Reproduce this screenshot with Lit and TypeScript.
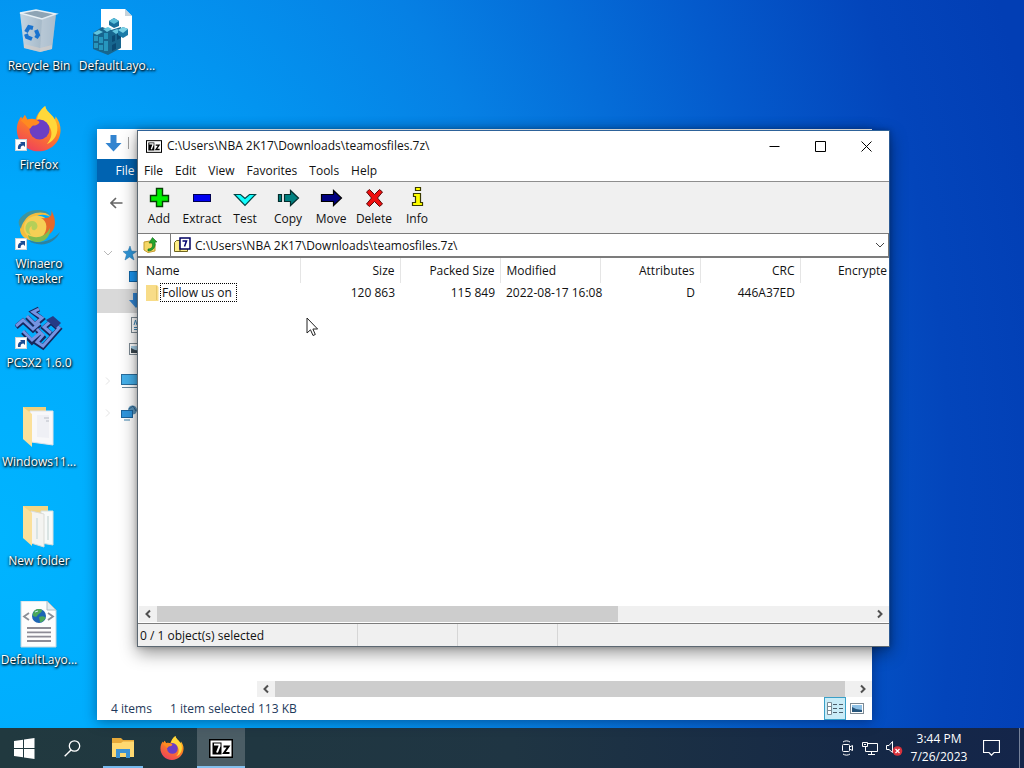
import { LitElement, html, svg, css, type TemplateResult } from "lit";
import { customElement } from "lit/decorators.js";

const shortcutArrow = svg`
  <g transform="translate(0 33)">
    <rect x="0.5" y="0.5" width="11" height="11" fill="#fff" stroke="#c8d4dc"/>
    <path d="M3 10 C2.5 6 4.500 4.500 6.500 4.500 L5 3 H10 V8 L8.500 6.500 C6.500 6.500 5.500 7.500 5.500 10 Z" fill="#1c4d94"/>
  </g>`;

const foxShape = svg`
  <path d="M14 28 C6 28 0.500 21.500 0.500 14.500 C0.500 11 2 8 3.200 6.500 L4 8.500 L5.500 5.500 L7 8.500 C9 7.500 11 8 12 8.500 C13 5 15 2.500 18 0 C18.500 4 22 5.500 24 8.500 L24.500 6.500 C26.500 9 27.600 12 27.500 15 C27.300 22.500 21.500 28 14 28 Z" fill="url(#foxBody)"/>
  <path d="M18 0 C18.500 4 25 6 25.500 13 C26 19 22 22.500 19 23.500 C24 18 22 12 17 9.500 C15 8.500 14 8 13 8.500 C13.500 5 15 2.500 18 0 Z" fill="#ffd83a"/>
  <circle cx="14.500" cy="14.500" r="6.200" fill="#6b3fc4"/>
  <path d="M3 9 L5.500 5.500 L7 8.500 C10 7.500 13 8.500 14.500 9.800 C14 11.500 12 12 10.500 12 C9.500 12.500 9.500 13.500 8.500 14 Z" fill="#ff8a20"/>`;

const foxDefs = svg`
  <defs><linearGradient id="foxBody" x1="0.800" y1="0" x2="0.300" y2="1">
    <stop offset="0" stop-color="#ffd230"/><stop offset="0.400" stop-color="#ff8a1c"/><stop offset="1" stop-color="#f0405c"/>
  </linearGradient></defs>`;

const icons: Record<string, TemplateResult> = {
  bin: html`<svg width="48" height="48" viewBox="0 0 48 48" aria-hidden="true">
    <defs><linearGradient id="binFace" x1="0" x2="1"><stop offset="0" stop-color="#c3d5e2"/><stop offset="0.550" stop-color="#a9bccb"/><stop offset="1" stop-color="#8fa9bd"/></linearGradient></defs>
    <path d="M5 6 L21 3 L41 7 L37 42 L25 45 L9 41 Z" fill="url(#binFace)"/>
    <path d="M5 6 L21 3 L41 7 L27 12 Z" fill="#8ea4b5" stroke="#e6eff5" stroke-width="1.500"/>
    <path d="M27 12 L41 7 L37 42 L25 45 Z" fill="#d3dde5" opacity="0.400"/>
    <path d="M9 37 L25 41 L37 38 L37 42 L25 45 L9 41 Z" fill="#d8cfc8" opacity="0.600"/>
    <g fill="none" stroke="#1973cf" stroke-width="4"><path d="M11 25 L14 20 L18 21"/><path d="M21 23 L23 28 L21 31"/><path d="M17 32 L12 30 L11 27"/></g>
  </svg>`,
  registry: html`<svg width="48" height="48" viewBox="0 0 48 48" aria-hidden="true">
    <path d="M8 2 H32 L39 9 V43 H8 Z" fill="#fff"/><path d="M32 2 L39 9 H32 Z" fill="#c5d2da"/>
    <path d="M0 26 L9 20 L18 23 L28 20 V41 L15 48 L0 42 Z" fill="#17668f"/>
    <g fill="#62c5df"><path d="M0 26 L6 23 L10 25 L4 28Z"/><path d="M10 22 L15 20 L19 22 L14 25Z"/><path d="M19 24 L24 22 L28 24 L23 27Z"/></g>
    <g fill="#2796bd"><path d="M1 29 H5 V34 H1Z"/><path d="M6 30 H10 V36 H6Z"/><path d="M11 26 H15 V32 H11Z"/><path d="M1 36 H5 V41 H1Z"/><path d="M6 38 H10 V43 H6Z"/><path d="M11 34 H15 V44 H11Z"/></g>
    <g fill="#0b4b75"><path d="M19 29 L22 28 V34 L19 35Z"/><path d="M24 27 L28 25 V31 L24 33Z"/><path d="M19 38 L23 36 V42 L19 44Z"/></g>
    <path d="M16 14 L21 11 L26 14 V19 L21 21 L16 18Z" fill="#176f9b"/><path d="M16 14 L21 11 L26 14 L21 17Z" fill="#58bdd9"/>
    <path d="M25 23 L30 20 L35 22 V28 L30 31 L25 28Z" fill="#1b7ba8"/><path d="M25 23 L30 20 L35 22 L30 26Z" fill="#7bd2e6"/>
  </svg>`,
  firefox: html`<svg width="48" height="48" viewBox="0 0 48 48" aria-hidden="true">${foxDefs}
    <g transform="translate(1 0) scale(1.620)">${foxShape}</g>${shortcutArrow}</svg>`,
  winaero: html`<svg width="48" height="48" viewBox="0 0 48 48" aria-hidden="true">
    <g transform="translate(0 1)">
    <path d="M5 21 C7 5 26 -1 37 12 C27 5 17 10 15 20 C13 28 18 33 22 34 C12 36 4 30 5 21Z" fill="#f3bd3d"/>
    <path d="M20 10 C34 8 38 22 31 29 C24 36 12 34 9 24 C8 16 13 11 20 10Z" fill="#f6cf55"/>
    <path d="M4 14 C12 1 30 2 36 9 C25 4 15 7 10 14 C7 18 6 21 6 23 C4 20 3 17 4 14Z" fill="#3d94a0"/>
    <path d="M36 4 C43 15 41 29 27 31 C33 25 33 15 26 12 C34 13 38 10 36 4Z" fill="#e5682a"/>
    <path d="M13 29 C20 33 30 32 35 22 C36 32 27 38 19 36 C15 34 13 32 13 29Z" fill="#82bb4e"/>
    <path d="M14 34 C22 38 35 37 45 26 C41 35 32 40 22 38 C17 37 15 36 14 34Z" fill="#2d82a0"/>
    <path d="M12 27 C8 20 13 14 18 15 C23 16 24 22 20 24 C17 25 16 22 17 20 C13 22 14 26 16 29Z" fill="#b5cf58"/></g>${shortcutArrow}</svg>`,
  pcsx2: html`<svg width="48" height="48" viewBox="0 0 48 48" aria-hidden="true">
    <g transform="translate(0 4)">
    <g fill="none" stroke="#16275e" stroke-width="5"><path d="M1 19 L8 13 L18 22 L25 16 M8 24 L17 34 L25 27"/><path d="M12 9 L20 17 L27 11 L18 4 L24 1"/><path d="M22 22 L28 29 L22 35 L28 39 L44 21 L36 14 L29 20 L36 26"/></g>
    <g fill="none" stroke="#7594e3" stroke-width="3"><path d="M1 18 L8 12 L18 21 L25 15 M8 23 L17 32 L25 25"/><path d="M12 8 L20 16 L27 10 L18 4 L24 1"/><path d="M22 21 L28 27 L22 34 L28 38 L44 20 L36 13 L29 19 L36 25"/></g>
    <path d="M31 12 L38 8 L46 15 L41 20Z" fill="#253b85"/></g>${shortcutArrow}</svg>`,
  folderOne: html`<svg width="48" height="48" viewBox="0 0 48 48" aria-hidden="true">
    <path d="M8 4 H31 V38 H14 L8 36 Z" fill="#efcf7a"/><path d="M15 8 L38 8 V42 L16 39 Z" fill="#f8f8fa" stroke="#dfe3e8"/>
    <path d="M22 12 H34 V35 L22 34Z" fill="#eff0f5"/><path d="M29 15 H34 M31 18 H34" stroke="#b9bdc6"/>
    <path d="M8 4 L17 11 V44 L8 36 Z" fill="#fbe09a"/></svg>`,
  folderTwo: html`<svg width="48" height="48" viewBox="0 0 48 48" aria-hidden="true">
    <path d="M8 4 H33 V38 H14 L8 36 Z" fill="#f2d583"/><path d="M26 9 H38 V43 L26 41 Z" fill="#f7faf9" stroke="#d5dfdf"/>
    <path d="M16 9 L29 12 V45 L16 41 Z" fill="#f4f4f1" stroke="#dcdcd7"/><path d="M22 16 V37 M33 14 V38" stroke="#dae4e3" stroke-width="2"/>
    <path d="M8 4 L17 11 V44 L8 36 Z" fill="#fbe09a"/></svg>`,
  xml: html`<svg width="48" height="48" viewBox="0 0 48 48" aria-hidden="true">
    <path d="M6 0 H32 L41 9 V46 H6 Z" fill="#fdfdfd" stroke="#c3d6df"/><path d="M32 0 V9 H41Z" fill="#e3edf1" stroke="#aebdc5"/>
    <path d="M14 12 L9 15.500 L14 19 M33 12 L38 15.500 L33 19" fill="none" stroke="#8a8f98" stroke-width="1.800"/>
    <circle cx="24" cy="15" r="7" fill="#1c65b5"/><path d="M19 10 C22 7 26 8 27 9 C27 12 24 12 22 15 C21 17 18 15 17.500 14Z M24 16 C28 14 31 16 30.500 17 C29 20 26 22 25 21Z" fill="#4aa85a"/><path d="M20 11 L23 10" stroke="#c8e8f8"/>
    <path d="M12 27 H36 M12 31.300 H36 M12 35.600 H36 M12 40 H36" stroke="#8d8c96" stroke-width="1.800"/></svg>`,
  add: html`<svg width="24" height="24" viewBox="0 0 24 24" aria-hidden="true"><path d="M9.500 2.500 H15.500 V9.500 H21.500 V15.500 H15.500 V20.500 H9.500 V15.500 H3.500 V9.500 H9.500 Z" fill="#00f000" stroke="#064006" stroke-width="1.400"/></svg>`,
  extract: html`<svg width="24" height="24" viewBox="0 0 24 24" aria-hidden="true"><rect x="3.500" y="8.500" width="17" height="7" fill="#0000f0" stroke="#000050"/></svg>`,
  test: html`<svg width="24" height="24" viewBox="0 0 24 24" aria-hidden="true"><path d="M1.500 8.500 H7.500 L12 12.500 L16.500 8.500 H22.500 L12 19.500 Z" fill="#1ff" stroke="#044" stroke-width="1.200"/></svg>`,
  copy: html`<svg width="24" height="24" viewBox="0 0 24 24" aria-hidden="true"><path d="M2.500 8.500 H5.500 V15.500 H2.500Z M8.500 8.500 H14.500 V4.500 L22.500 12 L14.500 19.500 V15.500 H8.500Z" fill="#008080" stroke="#032c2c" stroke-width="1.200"/></svg>`,
  move: html`<svg width="24" height="24" viewBox="0 0 24 24" aria-hidden="true"><path d="M2.500 8.500 H14.500 V4.500 L22.500 12 L14.500 19.500 V15.500 H2.500Z" fill="#000080" stroke="#000" stroke-width="1.200"/></svg>`,
  delete: html`<svg width="24" height="24" viewBox="0 0 24 24" aria-hidden="true"><path d="M4.500 6 L7.500 3.500 L12.500 8.500 L17.500 3.500 L20.500 6 L15.500 12 L20.500 18 L17.500 20.500 L12.500 15.500 L7.500 20.500 L4.500 18 L9.500 12 Z" fill="#f00f0f" stroke="#5a0909"/></svg>`,
  info: html`<svg width="24" height="24" viewBox="0 0 24 24" aria-hidden="true"><path d="M10.500 1.500 H15.500 V4.500 H10.500Z M8.500 7.500 H15.500 V16.500 H17.500 V19.500 H7.500 V16.500 H10.500 V10.500 H8.500Z" fill="#ff0" stroke="#3a3a00" stroke-width="1.200"/></svg>`,
};

const sevenZip = (w: number, h: number) => html`
  <svg width=${w} height=${h} viewBox="0 0 24 19" aria-hidden="true">
    <rect width="24" height="19" fill="#000"/><rect x="1.500" y="1.500" width="21" height="16" fill="#fff"/>
    <rect x="3.500" y="3.500" width="9" height="12" fill="#000"/>
    <path d="M5 5.500 H10.500 V7 L8 13.500" fill="none" stroke="#fff" stroke-width="2"/>
    <path d="M14.500 7.500 H19.500 L15 14 H20.500" fill="none" stroke="#000" stroke-width="2"/>
  </svg>`;

const chevron = (dir: "left" | "right" | "down", colour: string, stroke = 2) => {
  const d = { left: "M8 2.500 L4.500 6 L8 9.500", right: "M4 2.500 L7.500 6 L4 9.500", down: "M2 4 L6 8 L10 4" }[dir];
  return html`<svg width="12" height="12" viewBox="0 0 12 12" aria-hidden="true"><path d=${d} fill="none" stroke=${colour} stroke-width=${stroke}/></svg>`;
};

const shared = css`
  :host { display: block; box-sizing: border-box; font: 12px/16px "Open Sans", "Noto Sans", sans-serif; color: #111; }
  *, *::before, *::after { box-sizing: border-box; }
  button { font: inherit; color: inherit; background: none; border: 0; margin: 0; padding: 0; }
  svg { display: block; flex: none; }
`;

@customElement("desktop-icons")
export class DesktopIcons extends LitElement {
  static styles = [shared, css`
    .grid { display: grid; grid-auto-flow: column; grid-template-rows: repeat(7, 99px); grid-auto-columns: 78px; justify-content: start; }
    .item { display: flex; flex-direction: column; align-items: center; gap: 3px; padding-top: 7px; color: #fff; line-height: 15px;
      text-shadow: 1px 1px 2px #000, 0 1px 3px #000; }
    .label { max-width: 78px; white-space: pre-line; }
    .second { grid-column: 2; grid-row: 1; }
  `];
  private items: [string, string][] = [
    ["bin", "Recycle Bin"], ["firefox", "Firefox"], ["winaero", "Winaero\nTweaker"], ["pcsx2", "PCSX2 1.6.0"],
    ["folderOne", "Windows11..."], ["folderTwo", "New folder"], ["xml", "DefaultLayo..."], ["registry", "DefaultLayo..."],
  ];
  render() {
    return html`<div class="grid">${this.items.map(([icon, label]) => html`
      <button class="item ${icon === "registry" ? "second" : ""}">${icons[icon]}<span class="label">${label}</span></button>`)}</div>`;
  }
}

@customElement("scroll-strip")
export class ScrollStrip extends LitElement {
  static properties = { thumb: { type: Number } };
  declare thumb: number;
  constructor() { super(); this.thumb = 50; }
  static styles = [shared, css`
    .bar { display: flex; align-items: stretch; height: 16px; background: #f0f0f0; }
    .arrow { width: 18px; flex: none; display: grid; place-items: center; }
    .track { flex: 1; display: flex; }
    .thumb { background: #cdcdcd; }
  `];
  render() {
    return html`<div class="bar">
      <button class="arrow" aria-label="Scroll left">${chevron("left", "#505050")}</button>
      <div class="track"><div class="thumb" style="width:${this.thumb}%"></div></div>
      <button class="arrow" aria-label="Scroll right">${chevron("right", "#505050")}</button>
    </div>`;
  }
}

@customElement("explorer-window")
export class ExplorerWindow extends LitElement {
  static styles = [shared, css`
    :host { display: flex; flex-direction: column; background: #fff; box-shadow: 0 2px 12px rgba(0, 20, 60, 0.450); overflow: hidden; }
    .title { display: flex; align-items: center; gap: 6px; height: 30px; padding: 0 0 2px 8px; }
    .rule { width: 1px; height: 12px; background: #a0a0a0; }
    .ribbon { display: flex; height: 23px; background: #fff; }
    .file { width: 56px; background: #0063b1; color: #fff; }
    .nav { display: flex; align-items: center; height: 42px; padding-left: 13px; }
    .tree { flex: 1; display: flex; flex-direction: column; width: 160px; padding-top: 17px; }
    .node { display: flex; align-items: center; gap: 7px; height: 24px; padding-left: 5px; }
    .child { padding-left: 31px; }
    .group { margin-top: 8px; }
    .on { background: #d9d9d9; }
    .scroll { margin-left: 160px; }
    .status { display: flex; align-items: center; height: 23px; padding-left: 14px; color: #1e395b; }
    .first { width: 59px; }
    .second { width: 88px; }
    .views { margin-left: auto; margin-right: 4px; display: flex; align-items: center; }
    .view { display: grid; place-items: center; width: 22px; height: 23px; }
    .picked { background: #c9ecf7; border: 1px solid #3aa0c8; }
  `];
  render() {
    return html`
      <div class="title">
        <svg width="17" height="17" viewBox="0 0 17 17" aria-hidden="true"><path d="M5.500 0 H11.500 V8 H16.500 L8.500 16.500 L0.500 8 H5.500Z" fill="#3284d0"/></svg>
        <span class="rule"></span>
      </div>
      <div class="ribbon"><button class="file">File</button></div>
      <div class="nav"><svg width="13" height="12" viewBox="0 0 13 12" aria-hidden="true"><path d="M12.500 6 H1.500 M6 1 L1 6 L6 11" fill="none" stroke="#666" stroke-width="1.600"/></svg></div>
      <div class="tree">
        <div class="node">${chevron("down", "#b8b8b8", 1)}<svg width="16" height="16" viewBox="0 0 16 16" aria-hidden="true"><path d="M9 1 L10.500 6 L15.500 6.500 L11.500 9.500 L13 15 L8.500 12 L4 15 L5.500 9.500 L2 6.500 L7 6Z" fill="#2f96d8" stroke="#2674ac" stroke-width="0.500"/></svg></div>
        <div class="node child"><svg width="16" height="16" viewBox="0 0 16 16" aria-hidden="true"><rect x="1.500" y="2.500" width="14" height="10" fill="#1c96f0" stroke="#0f65a8"/></svg></div>
        <div class="node child on"><svg width="16" height="16" viewBox="0 0 16 16" aria-hidden="true"><path d="M5 0 H11 V7 H15 L8 15 L1 7 H5Z" fill="#3284d0"/></svg></div>
        <div class="node child"><svg width="16" height="16" viewBox="0 0 16 16" aria-hidden="true"><rect x="3.500" y="0.500" width="12" height="15" fill="#fff" stroke="#7d8a94"/><path d="M6 8 L7.500 3 L9 8 M6 10.500 H13 M6 12.500 H13" fill="none" stroke="#3b88bb"/></svg></div>
        <div class="node child"><svg width="16" height="16" viewBox="0 0 16 16" aria-hidden="true"><rect x="1.500" y="2.500" width="14" height="11" fill="#fff" stroke="#7d8a94"/><path d="M3 5 H14 V12 H3Z" fill="#a5cee6"/><path d="M3 12 V7 L7 9 L14 10 V12Z" fill="#3d4a52"/></svg></div>
        <div class="node group">${chevron("right", "#e4e4e4", 1)}<svg width="17" height="16" viewBox="0 0 17 16" aria-hidden="true"><rect x="0.500" y="1.500" width="16" height="10" fill="#45b0ea" stroke="#2b6e9c"/><path d="M1 14.500 H17" stroke="#6b8799"/></svg></div>
        <div class="node group">${chevron("right", "#e4e4e4", 1)}<svg width="17" height="16" viewBox="0 0 17 16" aria-hidden="true"><circle cx="11.500" cy="5" r="4.500" fill="#5b95bb"/><path d="M8 4 L12 1 L15 6" fill="none" stroke="#2c5f88"/><rect x="0.500" y="5.500" width="11" height="7" fill="#2f96de" stroke="#1d639a"/><path d="M3 15 H9" stroke="#3b82ad"/></svg></div>
      </div>
      <scroll-strip class="scroll" thumb="98.500"></scroll-strip>
      <div class="status">
        <span class="first">4 items</span><span class="second">1 item selected</span><span>113 KB</span>
        <div class="views">
          <button class="view picked" aria-label="Details view"><svg width="17" height="13" viewBox="0 0 17 13" aria-hidden="true"><path d="M0.500 0.500 H4.500 V12.500 H0.500Z M0.500 4.500 H4.500 M0.500 8.500 H4.500" fill="#fff" stroke="#7a8b95"/><path d="M6 2.500 H10 M12 2.500 H16 M6 6.500 H10 M12 6.500 H16 M6 10.500 H10 M12 10.500 H16" stroke="#4c5f6c"/></svg></button>
          <button class="view" aria-label="Large icons view"><svg width="14" height="11" viewBox="0 0 14 11" aria-hidden="true"><rect x="0.500" y="0.500" width="13" height="10" fill="#fff" stroke="#7d8a94"/><path d="M2 2 H12 V9 H2Z" fill="#8fc1e6"/><path d="M2 4 L6 6 L12 7 V9 H2Z" fill="#27567c"/></svg></button>
        </div>
      </div>`;
  }
}

@customElement("archive-window")
export class ArchiveWindow extends LitElement {
  static styles = [shared, css`
    :host { display: flex; flex-direction: column; background: #fff; border: 1px solid #5c6872; border-right-color: #2c5a94; border-top-color: #2d6299;
      box-shadow: 0 6px 16px rgba(0, 0, 0, 0.420), 0 0 5px rgba(0, 0, 0, 0.250); }
    .title { display: flex; align-items: center; height: 30px; padding-left: 8px; }
    .name { font: inherit; margin: 0 0 0 5px; flex: 1; }
    .win { width: 46px; height: 28px; display: grid; place-items: center; }
    .menu { display: flex; height: 21px; border-bottom: 1px solid #8e8e8e; }
    .entry { padding: 0 6px; line-height: 20px; }
    .tools { display: flex; height: 52px; background: #f0f0f0; border-bottom: 1px solid #7c7c7c; }
    .tool { width: 43px; display: flex; flex-direction: column; align-items: center; padding: 4px 1px 0 0; gap: 1px; white-space: nowrap; }
    .path { display: flex; height: 24px; border-bottom: 2px solid #7c7c7c; }
    .up { width: 32px; padding-left: 5px; display: flex; align-items: center; }
    .combo { flex: 1; display: flex; align-items: center; gap: 4px; padding: 0 2px 0 3px; border-left: 1px solid #7a7a7a; border-right: 1px solid #7a7a7a; }
    .select { appearance: none; flex: 1; border: 0; background: transparent; font: inherit; color: inherit; padding: 1px 0 0; margin: 0; outline: 0; }
    .list { flex: 1; overflow: hidden; padding-left: 1px; }
    .table { table-layout: fixed; width: 100%; border-collapse: collapse; }
    .table th, .table td { font-weight: 400; text-align: right; padding: 0 5px 0 6px; width: 100px; white-space: nowrap; }
    .table th { height: 25px; border-right: 1px solid #e5e5e5; }
    .table td { height: 19px; }
    .table .left { text-align: left; }
    .table .date { padding-right: 0; }
    .table .wide { width: 161px; padding-left: 7px; }
    .table .rest { width: auto; padding-right: 2px; border-right: 0; }
    .cell { display: flex; align-items: center; gap: 2px; }
    .focus { outline: 1px dotted #000; padding: 0 4px 0 1px; line-height: 17px; }
    .foot { border: solid #fff; border-width: 0 0 1px 1px; }
    .status { display: flex; height: 23px; background: #f0f0f0; border-top: 1px solid #7c7c7c; line-height: 24px; }
    .pane { width: 100px; border-right: 1px solid #d6d6d6; }
    .count { width: 220px; padding-left: 2px; }
  `];
  private menu = ["File", "Edit", "View", "Favorites", "Tools", "Help"];
  private tools = ["Add", "Extract", "Test", "Copy", "Move", "Delete", "Info"];
  private columns = ["Name", "Size", "Packed Size", "Modified", "Attributes", "CRC", "Encrypte"];
  private location = "C:\\Users\\NBA 2K17\\Downloads\\teamosfiles.7z\\";
  private controls = [
    ["Minimize", "M0.500 5.500 H10.500"],
    ["Maximize", "M0.500 0.500 H10.500 V10.500 H0.500Z"],
    ["Close", "M0.500 0.500 L10.500 10.500 M10.500 0.500 L0.500 10.500"],
  ];
  private cls(i: number) { return i === 0 ? "left wide" : i === 3 ? "left date" : i === 6 ? "rest" : ""; }
  render() {
    return html`
      <div class="title">${sevenZip(16, 13)}<h1 class="name">${this.location}</h1>
        ${this.controls.map(([label, d]) => html`
          <button class="win" aria-label=${label}><svg width="11" height="11" viewBox="0 0 11 11" aria-hidden="true"><path d=${d} fill="none" stroke="#000"/></svg></button>`)}
      </div>
      <div class="menu" role="menubar">${this.menu.map((m) => html`<button class="entry" role="menuitem">${m}</button>`)}</div>
      <div class="tools">${this.tools.map((t) => html`<button class="tool">${icons[t.toLowerCase()]}<span>${t}</span></button>`)}</div>
      <div class="path">
        <button class="up" aria-label="Up one level"><svg width="16" height="16" viewBox="0 0 16 16" aria-hidden="true"><path d="M1 5 L7 4 L12 7 V14 L5 15.500 L1 13Z" fill="#f4d765" stroke="#c39b30"/><path d="M5 12 C10 12 10 8 9 6 H6 L9.500 0.500 L14 5 H12 C13 10 10 14 5 14Z" fill="#25a52c" stroke="#0d661a" stroke-width="0.600"/></svg></button>
        <label class="combo">
          <svg width="17" height="16" viewBox="0 0 17 16" aria-hidden="true"><path d="M0.500 5.500 L2.500 3.500 H6 V14.500 H0.500Z M6 14.500 H13.500 V11 H6" fill="#ffef86" stroke="#6e6420"/><rect x="6" y="1" width="10" height="11" fill="#fff" stroke="#000060" stroke-width="1.500"/><path d="M8.500 4 H12.500 L10.500 9.500" fill="none" stroke="#000070" stroke-width="1.500"/></svg>
          <select class="select" aria-label="Current folder"><option>${this.location}</option></select>
          ${chevron("down", "#444", 1)}
        </label>
      </div>
      <div class="list">
        <table class="table">
          <thead><tr>${this.columns.map((c, i) => html`<th class=${this.cls(i)}>${c}</th>`)}</tr></thead>
          <tbody><tr>
            <td class="left wide"><div class="cell"><svg width="13" height="16" viewBox="0 0 13 16" aria-hidden="true"><path d="M0 0 H11 L12.500 2 V16 H0Z" fill="#f8dc88"/><path d="M10.500 1 V15" stroke="#e6c76a"/></svg><span class="focus">Follow us on</span></div></td>
            <td>120 863</td><td>115 849</td><td class="left date">2022-08-17 16:08</td><td>D</td><td>446A37ED</td><td></td>
          </tr></tbody>
        </table>
      </div>
      <scroll-strip class="foot" thumb="64.500"></scroll-strip>
      <div class="status"><span class="pane count">0 / 1 object(s) selected</span><span class="pane"></span><span class="pane"></span></div>`;
  }
}

@customElement("task-bar")
export class TaskBar extends LitElement {
  static styles = [shared, css`
    :host { color: #fff; }
    .bar { display: flex; height: 40px; background: linear-gradient(90deg, #21393f, #1f3543 50%, #152846 85%, #14254a); }
    .task { width: 48px; display: grid; place-items: center; border-bottom: 2px solid transparent; padding-top: 2px; }
    .apps { display: flex; gap: 1px; margin-left: 3px; }
    .open { background: linear-gradient(#76b9ed, #76b9ed) bottom / 40px 2px no-repeat border-box; }
    .active { background: #4b5d65; border-bottom-color: #84c0ee; }
    .tray { margin-left: auto; display: flex; align-items: center; }
    .signs { display: flex; align-items: center; gap: 8px; margin-right: 4px; }
    .clock { width: 64px; text-align: center; line-height: 18px; }
    .note { width: 40px; margin-right: 8px; display: grid; place-items: center; }
    .peek { width: 5px; height: 40px; border-left: 1px solid #76829a; }
  `];
  render() {
    return html`<div class="bar">
      <button class="task" aria-label="Start"><svg width="21" height="21" viewBox="0 0 21 21" aria-hidden="true"><path d="M0 3 L9 1.700 V10 H0Z M10 1.500 L20.500 0 V10 H10Z M0 11 H9 V19.300 L0 18Z M10 11 H20.500 V21 L10 19.500Z" fill="#fff"/></svg></button>
      <button class="task" aria-label="Search"><svg width="17" height="17" viewBox="0 0 17 17" aria-hidden="true"><circle cx="10.500" cy="6" r="5.200" fill="none" stroke="#fff" stroke-width="1.300"/><path d="M7 10 L0.700 16.300" stroke="#fff" stroke-width="1.400"/></svg></button>
      <div class="apps">
        <button class="task open" aria-label="File Explorer"><svg width="24" height="20" viewBox="0 0 24 20" aria-hidden="true"><path d="M1 0 H10 L12 2 H23 V19 H1Z" fill="#e6a93a"/><path d="M1 5 H10 L12 3.500 H23 V19 H1Z" fill="#ffd971"/><path d="M5 20 V11 H19 V20 H15 V15 H9 V20Z" fill="#3d92d4"/></svg></button>
        <button class="task" aria-label="Firefox"><svg width="24" height="24" viewBox="0 0 28 28" aria-hidden="true">${foxDefs}${foxShape}</svg></button>
        <button class="task active" aria-label="7-Zip">${sevenZip(24, 19)}</button>
      </div>
      <div class="tray">
        <div class="signs">
          <svg width="13" height="16" viewBox="0 0 13 16" aria-hidden="true"><g fill="none" stroke="#fff"><rect x="1.500" y="4.500" width="7" height="7" rx="1"/><path d="M8.500 7 L11.500 5.500 V10.500 L8.500 9 M2 2 C4 0.500 7 0.500 9 2 M2 14 C4 15.500 7 15.500 9 14"/></g></svg>
          <svg width="16" height="14" viewBox="0 0 16 14" aria-hidden="true"><g fill="none" stroke="#fff"><path d="M5 2.500 H15.500 V10.500 H3.500 V6 M9.500 10.500 V13 M6 13.500 H13"/><path d="M0.500 1.500 H5.500 V5.500 H0.500Z M2 3.500 H4"/></g></svg>
          <svg width="17" height="16" viewBox="0 0 17 16" aria-hidden="true"><path d="M0.500 5.500 H3 L6.500 1.500 V12.500 L3 9.500 H0.500Z" fill="none" stroke="#fff"/><circle cx="11.500" cy="11" r="4.800" fill="#d8323c"/><path d="M9.500 9 L13.500 13 M13.500 9 L9.500 13" stroke="#fff" stroke-width="1.200"/></svg>
        </div>
        <div class="clock">3:44 PM<br>7/26/2023</div>
        <button class="note" aria-label="Notifications"><svg width="17" height="16" viewBox="0 0 17 16" aria-hidden="true"><path d="M0.500 0.500 H16.500 V12.500 H11 L8.500 15.200 L6 12.500 H0.500Z" fill="none" stroke="#fff" stroke-width="1.200"/></svg></button>
        <span class="peek"></span>
      </div>
    </div>`;
  }
}

@customElement("app-root")
export class AppRoot extends LitElement {
  static styles = [shared, css`
    :host { display: flex; flex-direction: column; height: 100vh; overflow: hidden;
      background: radial-gradient(ellipse 100% 180% at 0 70%, #00b4ff 0, #00a8fc 25%, #0680e4 55%, #045acc 78%, #0345bb 93%, #023eb4 105%); }
    .desk { position: relative; flex: 1; min-height: 0; }
    .explorer { position: absolute; inset: 129px 152px 8px 97px; }
    .archive { position: absolute; inset: 130px 134px 81px 137px; }
    .pointer { position: absolute; left: 306px; top: 317px; }
  `];
  render() {
    return html`
      <main class="desk">
        <desktop-icons></desktop-icons>
        <explorer-window class="explorer"></explorer-window>
        <archive-window class="archive"></archive-window>
        <svg class="pointer" width="13" height="20" viewBox="0 0 13 20" aria-hidden="true"><path d="M1 1 V16 L4.500 12.800 L7 18.500 L9.300 17.500 L6.900 12 H11.600 Z" fill="#fff" stroke="#222"/></svg>
      </main>
      <task-bar></task-bar>`;
  }
}
